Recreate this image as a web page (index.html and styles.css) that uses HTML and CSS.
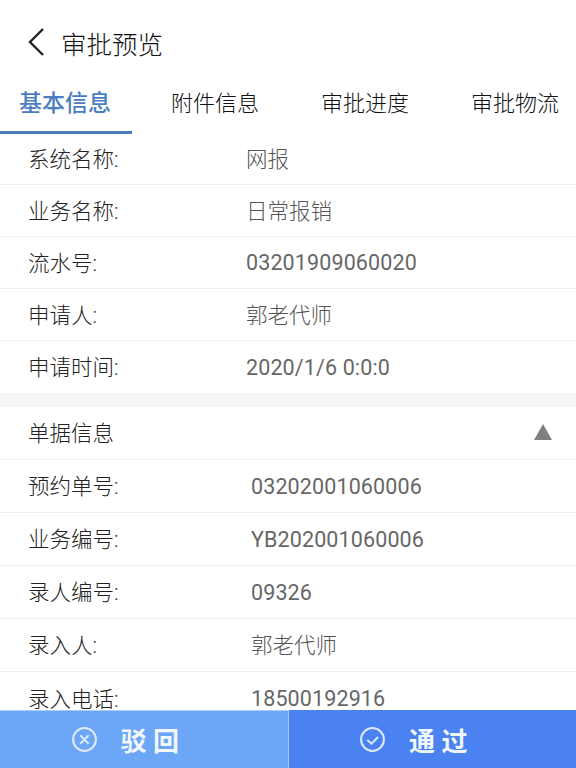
FILE: index.html
```html
<!DOCTYPE html>
<html lang="zh-CN">
<head>
<meta charset="utf-8">
<title>审批预览</title>
<link rel="stylesheet" href="styles.css">
</head>
<body>
<div class="app">
  <header class="topbar">
    <svg class="back" viewBox="0 0 20 30" width="20" height="30"><path d="M17 2 L4 15 L17 28" fill="none" stroke="#222" stroke-width="2.4"/></svg>
    <h1 class="title">审批预览</h1>
  </header>
  <nav class="tabs">
    <div class="tab active">基本信息</div>
    <div class="tab">附件信息</div>
    <div class="tab">审批进度</div>
    <div class="tab">审批物流</div>
  </nav>
  <main class="content">
    <section class="group">
      <div class="row first"><span class="label">系统名称:</span><span class="value">网报</span></div>
      <div class="row"><span class="label">业务名称:</span><span class="value">日常报销</span></div>
      <div class="row"><span class="label">流水号:</span><span class="value num">03201909060020</span></div>
      <div class="row"><span class="label">申请人:</span><span class="value">郭老代师</span></div>
      <div class="row last"><span class="label">申请时间:</span><span class="value num">2020/1/6 0:0:0</span></div>
    </section>
    <div class="sep"></div>
    <section class="group detail">
      <div class="row head"><span class="label">单据信息</span><span class="tri"></span></div>
      <div class="row"><span class="label">预约单号:</span><span class="value num">03202001060006</span></div>
      <div class="row"><span class="label">业务编号:</span><span class="value num">YB202001060006</span></div>
      <div class="row"><span class="label">录人编号:</span><span class="value num">09326</span></div>
      <div class="row"><span class="label">录入人:</span><span class="value">郭老代师</span></div>
      <div class="row last"><span class="label">录入电话:</span><span class="value num">18500192916</span></div>
    </section>
  </main>
  <footer class="actions">
    <button class="btn reject">
      <svg class="ico" viewBox="0 0 26 26" width="27" height="27"><circle cx="13" cy="13" r="11" fill="none" stroke="#dbe9fb" stroke-width="2"/><path d="M9 9 L17 17 M17 9 L9 17" fill="none" stroke="#dbe9fb" stroke-width="2"/></svg>
      <span>驳 回</span>
    </button>
    <button class="btn pass">
      <svg class="ico" viewBox="0 0 26 26" width="27" height="27"><circle cx="13" cy="13" r="11" fill="none" stroke="#dbe9fb" stroke-width="2"/><path d="M8 13.5 L12 17 L18.5 10.5" fill="none" stroke="#dbe9fb" stroke-width="2"/></svg>
      <span>通 过</span>
    </button>
  </footer>
</div>
</body>
</html>
```
FILE: styles.css
```css
* { box-sizing: border-box; }
html, body { margin: 0; padding: 0; background: #fff; }
body { font-family: Roboto, "Noto Sans CJK SC", sans-serif; }
.app { width: 576px; height: 768px; overflow: hidden; display: flex; flex-direction: column; position: relative; }
.topbar { height: 74px; flex: none; padding: 10px 0 0 26px; display: flex; align-items: center; gap: 15px; }
.back { flex: none; }
.title { margin: 0; font-size: 25.5px; font-weight: 300; color: #111; }
.tabs { height: 60px; flex: none; display: flex; }
.tab { flex: none; width: 150px; height: 60px; font-size: 22px; font-weight: 300; color: #111; white-space: nowrap; line-height: 60px; }
.tab.active { width: 132px; margin-right: 39px; padding-left: 19px; color: #4a7dc0; font-weight: 500; font-size: 23px; border-bottom: 3px solid #4a7dc0; }
.content { flex: 1; overflow: hidden; }
.row { height: 52px; padding: 0 24px 3px 28px; display: flex; align-items: center; border-bottom: 1px solid #eeeeee; font-size: 21.5px; }
.row.first { height: 51px; }
.row.last { border-bottom: 0; }
.label { width: 218px; flex: none; color: #222; font-weight: 300; }
.value { color: #555; font-size: 21.5px; font-weight: 300; }
.value.num { color: #666; font-weight: 400; letter-spacing: .12px; padding-top: 3px; }
.sep { height: 14px; background: #f5f5f5; }
.detail .row { height: 53px; }
.detail .label { width: 223px; }
.row.head { justify-content: space-between; }
.tri { width: 0; height: 0; border-left: 9px solid transparent; border-right: 9px solid transparent; border-bottom: 16px solid #808080; }
.actions { position: absolute; left: 0; right: 0; bottom: 0; height: 58px; display: flex; }
.btn { flex: 1; border: 0; margin: 0; padding: 0 38px 0 0; display: flex; align-items: center; justify-content: center; gap: 23px; color: #f2f7fe; font: 700 26px Roboto, "Noto Sans CJK SC", sans-serif; }
.btn.reject { background: #6ca6f6; border-top: 1px solid #a9cdf8; border-right: 1px solid #a9cdf8; }
.btn.pass { background: #4a82f2; }
```
